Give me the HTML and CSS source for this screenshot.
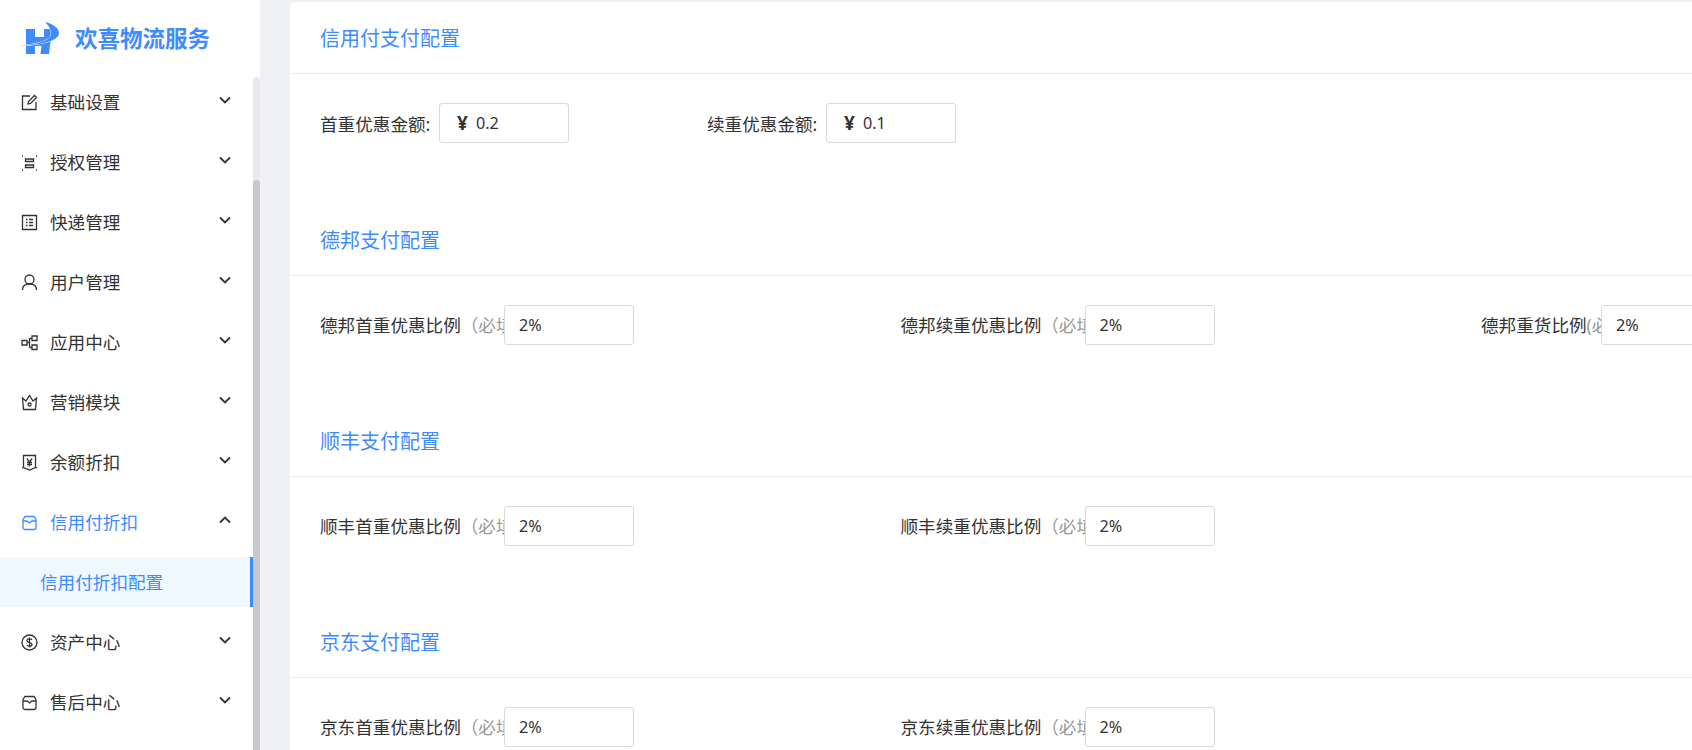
FILE: index.html
```html
<!DOCTYPE html>
<html lang="zh-CN">
<head>
  <meta charset="UTF-8">
  <meta name="viewport" content="width=device-width, initial-scale=1.0">
  <title>信用付折扣配置</title>
  <link rel="stylesheet" href="styles.css">
</head>
<body>
  <aside class="sidebar">
    <div class="brand">
      <svg class="brand-logo" viewBox="0 0 40 34" width="40" height="34">
        <path fill="#3d8bff" d="M5 8h9v8h9V8h8l-3 25h-8.500l1-8H14v8H5z"/>
        <path class="brand-swoosh" d="M24 1c8 2 14 6 14 11 0 6-10 11-38 13 12-2 28-4 30-11 1-4-2-9-6-13z"/>
      </svg>
      <span class="brand-name">欢喜物流服务</span>
    </div>
    <div class="menu-wrap">
      <nav class="menu">
        <div class="menu-item">
          <svg class="menu-icon" viewBox="0 0 17 17"><path d="M9 2H1.500v13.500H15V8M7 10l.5-2.500L13.500 1.500 15.500 3.500 9.500 9.500z"/></svg>
          <span class="menu-text">基础设置</span>
          <svg class="chevron" viewBox="0 0 12 8"><path d="M1 1.500l5 5 5-5"/></svg>
        </div>
        <div class="menu-item">
          <svg class="menu-icon" viewBox="0 0 17 17"><path d="M1 2h1M16 2h-1M1 16h1M16 16h-1M4.500 5h8v2.500h-8zM4.500 11h8v2.500h-8z"/></svg>
          <span class="menu-text">授权管理</span>
          <svg class="chevron" viewBox="0 0 12 8"><path d="M1 1.500l5 5 5-5"/></svg>
        </div>
        <div class="menu-item">
          <svg class="menu-icon" viewBox="0 0 17 17"><path d="M1.500 1.500h14v14h-14zM5 5.500h1.500M5 8.500h1.500M5 11.500h1.500M8 5.500h4M8 8.500h4M8 11.500h4"/></svg>
          <span class="menu-text">快递管理</span>
          <svg class="chevron" viewBox="0 0 12 8"><path d="M1 1.500l5 5 5-5"/></svg>
        </div>
        <div class="menu-item">
          <svg class="menu-icon" viewBox="0 0 17 17"><circle cx="8.500" cy="5.500" r="4.500"/><path d="M1.500 16c0-4 3-6 7-6s7 2 7 6"/></svg>
          <span class="menu-text">用户管理</span>
          <svg class="chevron" viewBox="0 0 12 8"><path d="M1 1.500l5 5 5-5"/></svg>
        </div>
        <div class="menu-item">
          <svg class="menu-icon" viewBox="0 0 17 17"><path d="M1 6.500h5v4.500H1zM11 2h5v4.500h-5zM11 11h5v4.500h-5zM6 8.500h2.500M8.500 4.500v9M8.500 4.500H11M8.500 13.500H11"/></svg>
          <span class="menu-text">应用中心</span>
          <svg class="chevron" viewBox="0 0 12 8"><path d="M1 1.500l5 5 5-5"/></svg>
        </div>
        <div class="menu-item">
          <svg class="menu-icon" viewBox="0 0 17 17"><path d="M1.500 4l3.500 3 3.500-5.500L12 7l3.500-3-1 11.500h-12z"/><circle cx="8.500" cy="10.500" r="1.500"/></svg>
          <span class="menu-text">营销模块</span>
          <svg class="chevron" viewBox="0 0 12 8"><path d="M1 1.500l5 5 5-5"/></svg>
        </div>
        <div class="menu-item">
          <svg class="menu-icon" viewBox="0 0 17 17"><path d="M2.500 1.500h12v12l-6 2.500-6-2.500zM1 14l1.500-.5M16 14l-1.500-.5M5.800 4.500l2.700 3.500 2.700-3.500M8.500 8v4.500M6 8.500h5M6 10.500h5"/></svg>
          <span class="menu-text">余额折扣</span>
          <svg class="chevron" viewBox="0 0 12 8"><path d="M1 1.500l5 5 5-5"/></svg>
        </div>
        <div class="menu-item is-open">
          <svg class="menu-icon" viewBox="0 0 17 17"><path d="M4 2.500h9l2 3v8a2 2 0 0 1-2 2H4a2 2 0 0 1-2-2v-8zM2 7h4l2.500 2 2.500-2h4"/></svg>
          <span class="menu-text">信用付折扣</span>
          <svg class="chevron" viewBox="0 0 12 8"><path d="M1 6.500l5-5 5 5"/></svg>
        </div>
        <div class="submenu-item">信用付折扣配置</div>
        <div class="menu-item">
          <svg class="menu-icon" viewBox="0 0 17 17"><circle cx="8.500" cy="8.500" r="7.500"/><path d="M11 5.800C10.500 5 9.500 4.800 8.500 4.800c-1.500 0-2.500.8-2.500 1.900 0 2.600 5 1.200 5 3.700 0 1.100-1 1.800-2.500 1.800-1 0-2-.3-2.600-1.100M8.500 3.500v10"/></svg>
          <span class="menu-text">资产中心</span>
          <svg class="chevron" viewBox="0 0 12 8"><path d="M1 1.500l5 5 5-5"/></svg>
        </div>
        <div class="menu-item">
          <svg class="menu-icon" viewBox="0 0 17 17"><path d="M4 2.500h9l2 3v8a2 2 0 0 1-2 2H4a2 2 0 0 1-2-2v-8zM2 7h4l2.500 2 2.500-2h4"/></svg>
          <span class="menu-text">售后中心</span>
          <svg class="chevron" viewBox="0 0 12 8"><path d="M1 1.500l5 5 5-5"/></svg>
        </div>
      </nav>
      <div class="scroll-track"><div class="scroll-thumb"></div></div>
    </div>
  </aside>

  <main class="main">
    <div class="card">
      <section class="section section-first">
        <h3 class="section-title">信用付支付配置</h3>
        <div class="section-body">
          <div class="money-field">
            <label class="money-label">首重优惠金额:</label>
            <div class="money-input"><span class="money-prefix">¥</span><input type="text" value="0.2"></div>
          </div>
          <div class="money-field">
            <label class="money-label">续重优惠金额:</label>
            <div class="money-input"><span class="money-prefix">¥</span><input type="text" value="0.1"></div>
          </div>
        </div>
      </section>

      <section class="section">
        <h3 class="section-title">德邦支付配置</h3>
        <div class="section-body rate-grid">
          <div class="rate-field">
            <label class="rate-label">德邦首重优惠比例<span class="hint">（必填）</span></label>
            <input class="rate-input" type="text" value="2%">
          </div>
          <div class="rate-field">
            <label class="rate-label">德邦续重优惠比例<span class="hint">（必填）</span></label>
            <input class="rate-input" type="text" value="2%">
          </div>
          <div class="rate-field">
            <label class="rate-label short">德邦重货比例<span class="hint tight">(必填)</span></label>
            <input class="rate-input" type="text" value="2%">
          </div>
        </div>
      </section>

      <section class="section">
        <h3 class="section-title">顺丰支付配置</h3>
        <div class="section-body rate-grid">
          <div class="rate-field">
            <label class="rate-label">顺丰首重优惠比例<span class="hint">（必填）</span></label>
            <input class="rate-input" type="text" value="2%">
          </div>
          <div class="rate-field">
            <label class="rate-label">顺丰续重优惠比例<span class="hint">（必填）</span></label>
            <input class="rate-input" type="text" value="2%">
          </div>
        </div>
      </section>

      <section class="section">
        <h3 class="section-title">京东支付配置</h3>
        <div class="section-body rate-grid">
          <div class="rate-field">
            <label class="rate-label">京东首重优惠比例<span class="hint">（必填）</span></label>
            <input class="rate-input" type="text" value="2%">
          </div>
          <div class="rate-field">
            <label class="rate-label">京东续重优惠比例<span class="hint">（必填）</span></label>
            <input class="rate-input" type="text" value="2%">
          </div>
        </div>
      </section>
    </div>
  </main>
</body>
</html>
```

FILE: styles.css
```css
html, body {
  height: 100%;
}
body {
  margin: 0;
  display: flex;
  height: 750px;
  overflow: hidden;
  background-color: #eef0f4;
  color: #333;
  font-family: "Noto Sans", "Noto Sans CJK SC", sans-serif;
  font-size: 17.6px;
}
.sidebar {
  width: 260px;
  flex: none;
  display: flex;
  flex-direction: column;
  background-color: #fff;
}
.brand {
  height: 77px;
  flex: none;
  display: flex;
  align-items: center;
  padding-left: 21px;
  box-sizing: border-box;
}
.brand-logo {
  flex: none;
  margin-top: -2px;
  overflow: visible;
}
.brand-swoosh {
  fill: #3d8bff;
  stroke: #fff;
  stroke-width: 1;
  paint-order: stroke;
}
.brand-name {
  margin-left: 14px;
  margin-top: -2px;
  color: #3d8bff;
  font-size: 22.5px;
  font-weight: 700;
}
.menu-wrap {
  flex: 1;
  display: flex;
  min-height: 0;
}
.menu {
  width: 253px;
  flex: none;
}
.menu-item {
  height: 50px;
  margin-bottom: 10px;
  display: flex;
  align-items: center;
  padding-left: 21px;
}
.menu-icon {
  width: 17px;
  height: 17px;
  flex: none;
  fill: none;
  stroke: #333;
  stroke-width: 1.300;
}
.menu-text {
  margin-left: 12px;
  margin-bottom: 2px;
  flex: 1;
}
.chevron {
  width: 12px;
  height: 8px;
  flex: none;
  margin-right: 22px;
  margin-top: -5px;
  fill: none;
  stroke: #333;
  stroke-width: 1.800;
}
.menu-item.is-open .menu-text {
  color: #3d8bff;
}
.menu-item.is-open .menu-icon {
  stroke: #3d8bff;
}
.submenu-item {
  height: 50px;
  margin-bottom: 10px;
  padding-left: 40px;
  line-height: 50px;
  background-color: #f0f8ff;
  border-right: 3px solid #3d8bff;
  color: #3d8bff;
}
.scroll-track {
  width: 7px;
  flex: none;
  background-color: #e8e8e8;
  border-radius: 4px 4px 0 0;
}
.scroll-thumb {
  height: 100%;
  margin-top: 103px;
  background-color: #c8c8c8;
  border-radius: 4px 4px 0 0;
}
.main {
  flex: 1;
  min-width: 0;
  padding: 2px 0 0 30px;
  overflow: hidden;
}
.card {
  background-color: #fff;
  border-radius: 4px 0 0 0;
  min-height: 100%;
}
.section {
  height: 201px;
}
.section-first {
  height: 202px;
}
.section-title {
  height: 71px;
  margin: 0;
  padding-left: 30px;
  line-height: 73px;
  color: #3d8bff;
  font-size: 20px;
  font-weight: 400;
  border-bottom: 1px solid #ececec;
}
.section-body {
  display: flex;
  padding: 29px 0 0 30px;
}
.money-field {
  display: flex;
  align-items: center;
  margin-right: 138px;
}
.money-label {
  width: 119px;
  flex: none;
  white-space: nowrap;
}
.money-input {
  display: flex;
  align-items: center;
  box-sizing: border-box;
  width: 130px;
  height: 40px;
  padding-left: 17px;
  border: 1px solid #d9d9d9;
  border-radius: 3px;
}
.money-prefix {
  width: 19px;
  flex: none;
  font-size: 19px;
  font-weight: 700;
}
.money-input input {
  width: 70px;
  padding: 0;
  border: 0;
  outline: 0;
  color: #333;
  font: inherit;
  font-size: 16.200px;
}
.rate-grid {
  display: grid;
  grid-template-columns: repeat(3, 580.500px);
}
.rate-field {
  display: flex;
  align-items: center;
}
.rate-label {
  width: 184px;
  flex: none;
  margin-bottom: 2px;
  overflow: hidden;
  white-space: nowrap;
}
.rate-label.short {
  width: 120px;
}
.hint {
  color: #999;
}
.rate-input {
  box-sizing: border-box;
  width: 130px;
  height: 40px;
  flex: none;
  padding: 0 14px;
  background-color: #fff;
  border: 1px solid #d9d9d9;
  border-radius: 3px;
  outline: 0;
  color: #333;
  font: inherit;
  font-size: 16.200px;
}
```
